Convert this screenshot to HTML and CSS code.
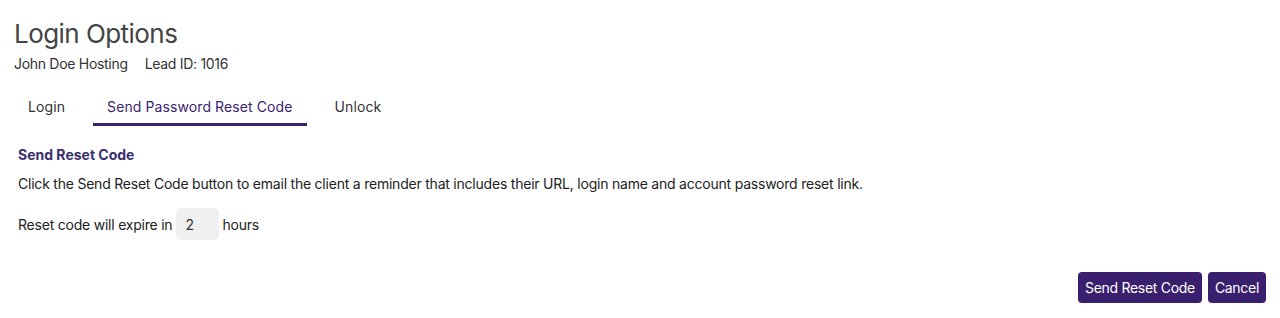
FILE: index.html
```html
<!DOCTYPE html>
<html>
<head>
	<title>Login Options</title>
	<link rel="stylesheet" href="styles.css">
</head>
<body>
	<div class="page">
		<h1 class="title">Login Options</h1>
		<div class="meta">
			<span>John Doe Hosting</span>
			<span>Lead ID: 1016</span>
		</div>
		<ul class="tabs">
			<li>Login</li>
			<li class="active">Send Password Reset Code</li>
			<li>Unlock</li>
		</ul>
		<div class="panel">
			<h2 class="panel-title">Send Reset Code</h2>
			<p class="desc">Click the Send Reset Code button to email the client a reminder that includes their URL, login name and account password reset link.</p>
			<div class="expire">
				<span>Reset code will expire in</span>
				<input class="hours" type="text" value="2">
				<span>hours</span>
			</div>
		</div>
		<div class="actions">
			<button class="btn">Send Reset Code</button>
			<button class="btn">Cancel</button>
		</div>
	</div>
</body>
</html>
```

FILE: styles.css
```css
*{
	padding: 0;
	margin: 0;
	box-sizing: border-box;
}
body{
	font-family: Inter, "Noto Sans", sans-serif;
	color: #222;
	background: #fff;
	letter-spacing: -0.22px;
}
li{
	list-style: none;
}
.page{
	padding: 16px 14px 0 14px;
}
.title{
	font-size: 26px;
	font-weight: 400;
	color: #444;
	line-height: 36px;
	letter-spacing: -0.55px;
}
.meta{
	display: flex;
	gap: 17px;
	font-size: 14px;
	color: #333;
	margin-top: 3px;
	line-height: 18px;
	letter-spacing: -0.3px;
}
.tabs{
	display: flex;
	margin-top: 25px;
}
.tabs>li{
	font-size: 14px;
	color: #333;
	padding: 0 14px 7px 14px;
	line-height: 18px;
	border-bottom: 3px solid transparent;
	margin-right: 14px;
	letter-spacing: 0.1px;
}
.tabs>li.active{
	color: #3a2372;
	border-bottom-color: #3a2372;
}
.panel{
	padding: 20px 4px 0 4px;
}
.panel-title{
	font-size: 14px;
	font-weight: 700;
	color: #3b2f6e;
	line-height: 18px;
	letter-spacing: 0;
}
.desc{
	font-size: 14px;
	line-height: 18px;
	margin-top: 11px;
	color: #222;
}
.expire{
	display: flex;
	align-items: center;
	font-size: 14px;
	margin-top: 15px;
}
.hours{
	width: 43px;
	height: 32px;
	border: none;
	border-radius: 5px;
	background: #f0f0f0;
	font-family: inherit;
	font-size: 14px;
	color: #333;
	padding-left: 9px;
	margin: 0 3px 0 4px;
}
.actions{
	display: flex;
	justify-content: flex-end;
	gap: 6px;
	margin-top: 32px;
}
.btn{
	background: #3a1f6e;
	color: #fff;
	border: none;
	border-radius: 4px;
	font-family: inherit;
	font-size: 14px;
	letter-spacing: -0.3px;
	height: 31px;
	padding: 0 7px;
}
```
